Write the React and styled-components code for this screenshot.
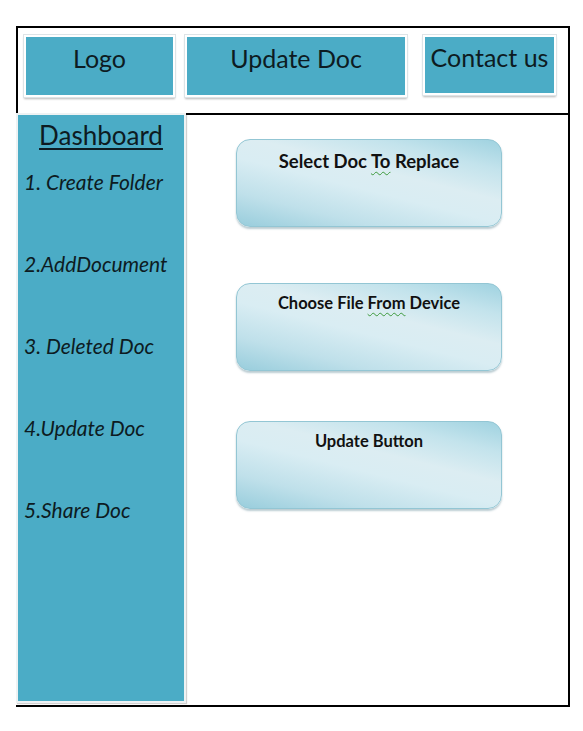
import React from 'react';
import styled, { createGlobalStyle } from 'styled-components';

const GlobalStyle = createGlobalStyle`
  body {
    margin: 0;
    background: #ffffff;
    font-family: 'Lato', 'Liberation Sans', sans-serif;
    color: #111;
  }
`;

const menuItems = ['1. Create Folder', '2.AddDocument', '3. Deleted Doc', '4.Update Doc', '5.Share Doc'];

const App = () => {
  return (
    <>
      <GlobalStyle />
      <Page>
        <Header>
          <NavBox $width={151} $height={62}>Logo</NavBox>
          <NavBox $width={222} $height={62} $gap={10}>Update Doc</NavBox>
          <NavBox $width={133} $height={60} $gap={16} $top={-1}>Contact us</NavBox>
        </Header>
        <Body>
          <Sidebar>
            <SideTitle>Dashboard</SideTitle>
            <Menu>
              {menuItems.map((item) => (
                <MenuItem key={item}>{item}</MenuItem>
              ))}
            </Menu>
          </Sidebar>
          <Main>
            <ActionCard $top={0} $size={18.5}>
              Select Doc <Squiggle>To</Squiggle> Replace
            </ActionCard>
            <ActionCard $top={56} $size={16.5}>
              Choose File <Squiggle>From</Squiggle> Device
            </ActionCard>
            <ActionCard $top={50} $size={16.5}>Update Button</ActionCard>
          </Main>
        </Body>
      </Page>
    </>
  );
};

const Page = styled.div`
  width: 554px;
  margin: 26px 0 0 16px;
  box-sizing: border-box;
`;

const Header = styled.header`
  display: flex;
  align-items: flex-start;
  height: 87px;
  box-sizing: border-box;
  border: 2px solid #000;
  border-bottom: none;
  padding: 7px 0 0 6px;
`;

const NavBox = styled.div`
  width: ${(p) => p.$width}px;
  height: ${(p) => p.$height}px;
  margin-left: ${(p) => p.$gap || 0}px;
  box-sizing: border-box;
  background: #4bacc6;
  border: 2px solid #ffffff;
  box-shadow: 0 0 0 1px #dde4e7, 0 2px 2px rgba(0, 0, 0, 0.28);
  text-align: center;
  padding-top: ${(p) => 6 + (p.$top || 0)}px;
  font-size: 25px;
  line-height: 1.2;
  color: #0d1b22;
  white-space: nowrap;
`;

const Body = styled.div`
  display: flex;
  height: 594px;
  box-sizing: border-box;
  border-right: 2px solid #000;
  border-bottom: 2px solid #000;
`;

const Sidebar = styled.aside`
  width: 170px;
  flex-shrink: 0;
  margin-bottom: 2px;
  box-sizing: border-box;
  background: #4bacc6;
  border: 2px solid #eef2f3;
  box-shadow: 1px 1px 1px rgba(0, 0, 0, 0.18);
  display: flex;
  flex-direction: column;
  align-items: center;
  padding-top: 5px;
`;

const SideTitle = styled.h2`
  margin: 0;
  font-size: 26px;
  font-weight: 400;
  line-height: 1.2;
  text-decoration: underline;
  text-decoration-thickness: 2px;
  text-underline-offset: 3px;
  color: #0d1b22;
`;

const Menu = styled.ul`
  list-style: none;
  margin: 18px 0 0;
  padding: 0 0 0 6px;
  align-self: stretch;
  display: flex;
  flex-direction: column;
  gap: 56px;
`;

const MenuItem = styled.li`
  font-style: italic;
  font-size: 21px;
  line-height: 26px;
  color: #0d1b22;
  white-space: nowrap;
`;

const Main = styled.main`
  flex: 1;
  border-top: 2px solid #000;
  padding: 24px 0 0 50px;
  display: flex;
  flex-direction: column;
`;

const ActionCard = styled.div`
  width: 266px;
  height: 88px;
  margin-top: ${(p) => p.$top}px;
  box-sizing: border-box;
  border-radius: 14px;
  border: 1px solid #93c6d4;
  background: linear-gradient(14deg, #98cddc 0%, #bfe0ea 22%, #d9edf3 45%, #dcedf2 60%, #c3e3ec 80%, #9fd2e0 100%);
  box-shadow: 0 2px 2px rgba(60, 110, 125, 0.35);
  text-align: center;
  padding-top: 10px;
  font-size: ${(p) => p.$size}px;
  font-weight: 700;
  line-height: 1.2;
  color: #111;
`;

const Squiggle = styled.span`
  text-decoration: underline wavy #3c9a3c;
  text-decoration-thickness: 1px;
  text-underline-offset: 3px;
`;

export default App;
